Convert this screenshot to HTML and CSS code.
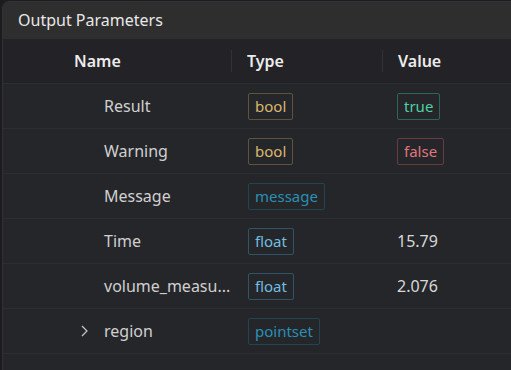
FILE: index.html
```html
<!DOCTYPE html>
<html lang="en">

<head>
    <meta charset="UTF-8">
    <title>Output Parameters</title>
    <link rel="stylesheet" href="styles.css">
</head>

<body>
    <div class="panel">
        <div class="panel-title">Output Parameters</div>

        <table class="params">
            <thead>
                <tr>
                    <th class="col-name"><span>Name</span></th>
                    <th class="col-type"><span>Type</span></th>
                    <th class="col-value"><span>Value</span></th>
                </tr>
            </thead>
            <tbody>
                <tr>
                    <td class="col-name"><span class="name">Result</span></td>
                    <td class="col-type"><span class="badge bool">bool</span></td>
                    <td class="col-value"><span class="badge true">true</span></td>
                </tr>
                <tr>
                    <td class="col-name"><span class="name">Warning</span></td>
                    <td class="col-type"><span class="badge bool">bool</span></td>
                    <td class="col-value"><span class="badge false">false</span></td>
                </tr>
                <tr>
                    <td class="col-name"><span class="name">Message</span></td>
                    <td class="col-type"><span class="badge message">message</span></td>
                    <td class="col-value"></td>
                </tr>
                <tr>
                    <td class="col-name"><span class="name">Time</span></td>
                    <td class="col-type"><span class="badge float">float</span></td>
                    <td class="col-value">15.79</td>
                </tr>
                <tr>
                    <td class="col-name"><span class="name">volume_measu...</span></td>
                    <td class="col-type"><span class="badge float">float</span></td>
                    <td class="col-value">2.076</td>
                </tr>
                <tr>
                    <td class="col-name">
                        <span class="name">
                            <svg class="chevron" width="10" height="14" viewBox="0 0 10 14">
                                <path d="M2 2 L7 7 L2 12" fill="none" stroke="#c8c8c8" stroke-width="1.2" />
                            </svg>region
                        </span>
                    </td>
                    <td class="col-type"><span class="badge message">pointset</span></td>
                    <td class="col-value"></td>
                </tr>
            </tbody>
        </table>
    </div>
</body>

</html>
```

FILE: styles.css
```css
body {
    margin: 0;
    padding: 1px 0 0 2px;
    background-color: #1c1c1e;
    font-family: "Noto Sans", "Open Sans", sans-serif;
    color: #d4d4d4;
    overflow: hidden;
}

.panel {
    width: 520px;
    height: 380px;
    background-color: #25262a;
    border: 1px solid #323236;
    border-radius: 7px 0 0 0;
    overflow: hidden;
}

.panel-title {
    height: 37px;
    padding-left: 15px;
    line-height: 36px;
    font-size: 16px;
    color: #e8e8e8;
    background-color: #2e2e2f;
}

.params {
    width: 508px;
    border-collapse: collapse;
    table-layout: fixed;
    font-size: 16px;
}

.params th {
    height: 44px;
    text-align: left;
    font-weight: 600;
    color: #ececec;
    background-color: #232327;
    border-bottom: 1px solid #2c2d31;
    padding: 0;
}

.params th span {
    display: block;
    padding-left: 15px;
    border-left: 1px solid #323236;
    line-height: 22px;
}

.params th.col-name span {
    border-left: none;
    padding-left: 71px;
}

.params td {
    height: 44px;
    padding: 0 0 0 15px;
    border-bottom: 1px solid #2c2d31;
    color: #d8d8d8;
}

.col-name {
    width: 228px;
}

.col-type {
    width: 151px;
}

.params td.col-name {
    padding-left: 75px;
}

.params td.col-type {
    padding-left: 17px;
}

.name {
    display: flex;
    align-items: center;
    padding-left: 26px;
    color: #d0d0d0;
    white-space: nowrap;
}

.chevron {
    margin-left: -24px;
    margin-right: 14px;
}

.badge {
    display: inline-block;
    padding: 2px 6px 3px;
    font-size: 15px;
    border: 1px solid;
    border-radius: 2px;
    line-height: 20px;
}

.bool {
    color: #dcb86e;
    border-color: #5e5340;
}

.true {
    color: #4fcfa3;
    border-color: #2e6656;
}

.false {
    color: #e0757b;
    border-color: #693b3e;
}

.message {
    color: #2a8fb5;
    border-color: #234452;
}

.float {
    color: #72bde0;
    border-color: #2e5466;
}
```
